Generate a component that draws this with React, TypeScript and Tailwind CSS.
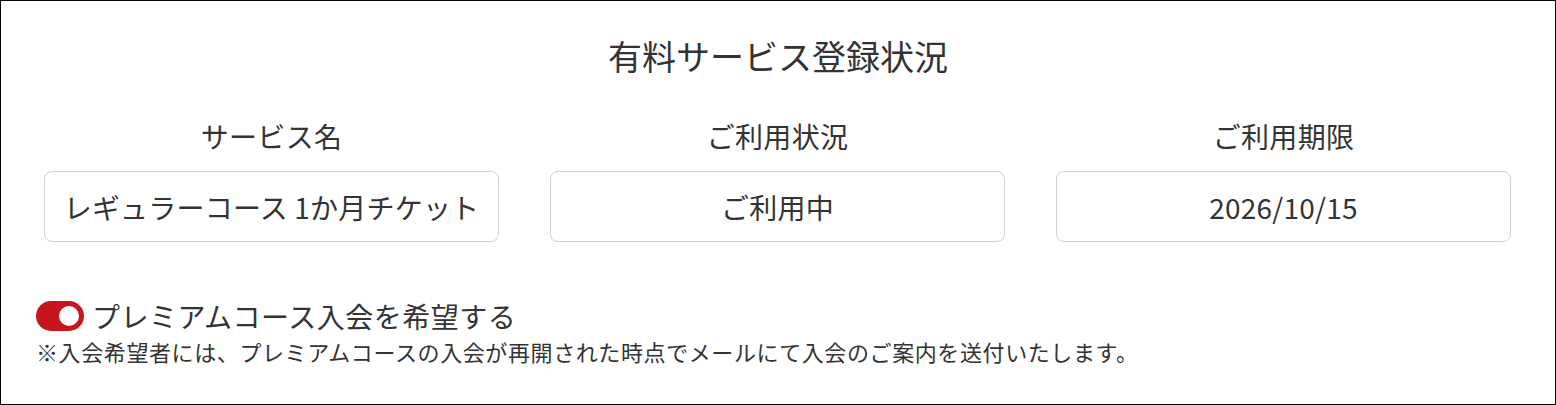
import * as React from "react";

const columns = [
  { label: "サービス名", value: "レギュラーコース 1か月チケット" },
  { label: "ご利用状況", value: "ご利用中" },
  { label: "ご利用期限", value: "2026/10/15" },
];

export default function App() {
  const [premium, setPremium] = React.useState(true);

  return (
    <div
      className="w-[1556px] h-[405px] bg-white border border-black text-[#333] overflow-hidden"
      style={{ fontFamily: '"Noto Sans CJK JP", "Noto Sans", sans-serif' }}
    >
      <h2 className="pt-[29px] text-center text-[34px] leading-[51px]">有料サービス登録状況</h2>

      <div className="mt-[34px] grid grid-cols-3 gap-[51px] pl-[43px] pr-[44px]">
        {columns.map((col) => (
          <div key={col.label} className="flex flex-col items-center">
            <div className="text-[28px] leading-[42px] tracking-[0.3px]">{col.label}</div>
            <div className="mt-[14px] w-full h-[71px] flex items-center justify-center rounded-lg border border-[#d0d0d0] text-[28px] tracking-[0.2px]">
              {col.value}
            </div>
          </div>
        ))}
      </div>

      <div className="mt-[56px] pl-[35px]">
        <label className="flex items-center gap-[8px] cursor-pointer">
          <button
            type="button"
            onClick={() => setPremium(!premium)}
            className={
              premium
                ? "w-[48px] h-[30px] rounded-full bg-[#c4161c] flex items-center justify-end px-[5px]"
                : "w-[48px] h-[30px] rounded-full bg-gray-300 flex items-center justify-start px-[5px]"
            }
          >
            <span className="w-[20px] h-[20px] rounded-full bg-white" />
          </button>
          <span className="text-[28px] leading-[36px] tracking-[0.5px]">プレミアムコース入会を希望する</span>
        </label>
        <p className="mt-[1px] text-[22px] leading-[33px] tracking-[0.6px]">
          ※入会希望者には、プレミアムコースの入会が再開された時点でメールにて入会のご案内を送付いたします。
        </p>
      </div>
    </div>
  );
}
